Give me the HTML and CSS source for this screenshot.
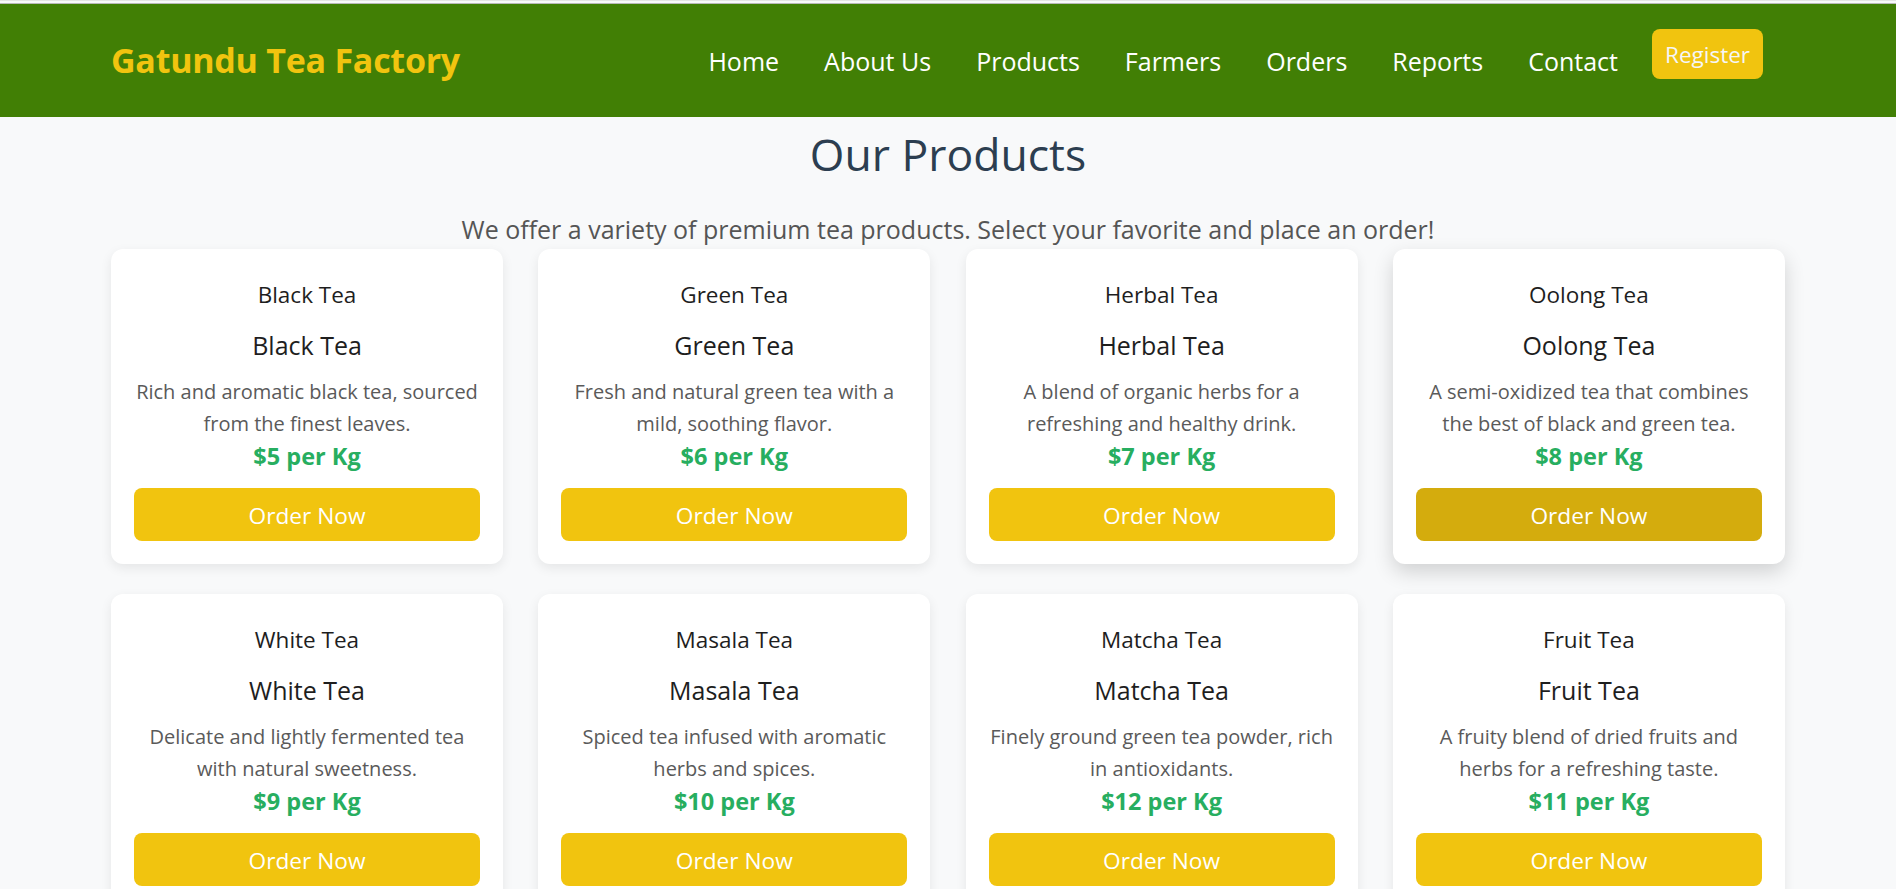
FILE: index.html
```html
<!DOCTYPE html>
<html lang="en">
<head>
<meta charset="utf-8">
<title>Gatundu Tea Factory - Products</title>
<link rel="stylesheet" href="styles.css">
</head>
<body>
<header class="site-header">
  <div class="header-inner">
    <a class="logo" href="#">Gatundu Tea Factory</a>
    <nav class="main-nav">
      <ul class="nav-links">
        <li><a href="#">Home</a></li>
        <li><a href="#">About Us</a></li>
        <li><a href="#">Products</a></li>
        <li><a href="#">Farmers</a></li>
        <li><a href="#">Orders</a></li>
        <li><a href="#">Reports</a></li>
        <li><a href="#">Contact</a></li>
      </ul>
      <a class="btn-register" href="#">Register</a>
    </nav>
  </div>
</header>

<main class="products">
  <h1 class="page-title">Our Products</h1>
  <p class="page-subtitle">We offer a variety of premium tea products. Select your favorite and place an order!</p>

  <div class="product-grid">
    <div class="card">
      <div class="card-label">Black Tea</div>
      <h3 class="card-title">Black Tea</h3>
      <p class="card-desc">Rich and aromatic black tea, sourced from the finest leaves.</p>
      <div class="card-price">$5 per Kg</div>
      <button class="btn-order">Order Now</button>
    </div>
    <div class="card">
      <div class="card-label">Green Tea</div>
      <h3 class="card-title">Green Tea</h3>
      <p class="card-desc">Fresh and natural green tea with a mild, soothing flavor.</p>
      <div class="card-price">$6 per Kg</div>
      <button class="btn-order">Order Now</button>
    </div>
    <div class="card">
      <div class="card-label">Herbal Tea</div>
      <h3 class="card-title">Herbal Tea</h3>
      <p class="card-desc">A blend of organic herbs for a refreshing and healthy drink.</p>
      <div class="card-price">$7 per Kg</div>
      <button class="btn-order">Order Now</button>
    </div>
    <div class="card card-hover">
      <div class="card-label">Oolong Tea</div>
      <h3 class="card-title">Oolong Tea</h3>
      <p class="card-desc">A semi-oxidized tea that combines the best of black and green tea.</p>
      <div class="card-price">$8 per Kg</div>
      <button class="btn-order">Order Now</button>
    </div>
    <div class="card">
      <div class="card-label">White Tea</div>
      <h3 class="card-title">White Tea</h3>
      <p class="card-desc">Delicate and lightly fermented tea with natural sweetness.</p>
      <div class="card-price">$9 per Kg</div>
      <button class="btn-order">Order Now</button>
    </div>
    <div class="card">
      <div class="card-label">Masala Tea</div>
      <h3 class="card-title">Masala Tea</h3>
      <p class="card-desc">Spiced tea infused with aromatic herbs and spices.</p>
      <div class="card-price">$10 per Kg</div>
      <button class="btn-order">Order Now</button>
    </div>
    <div class="card">
      <div class="card-label">Matcha Tea</div>
      <h3 class="card-title">Matcha Tea</h3>
      <p class="card-desc">Finely ground green tea powder, rich in antioxidants.</p>
      <div class="card-price">$12 per Kg</div>
      <button class="btn-order">Order Now</button>
    </div>
    <div class="card">
      <div class="card-label">Fruit Tea</div>
      <h3 class="card-title">Fruit Tea</h3>
      <p class="card-desc">A fruity blend of dried fruits and herbs for a refreshing taste.</p>
      <div class="card-price">$11 per Kg</div>
      <button class="btn-order">Order Now</button>
    </div>
  </div>
</main>
</body>
</html>
```

FILE: styles.css
```css
* {
  box-sizing: border-box;
}

html {
  background: #f8f9fa;
}

body {
  margin: 0;
  padding-top: 2px;
  border-top: 1px solid #e4e4e4;
  background: #f8f9fa;
  font-family: "Open Sans", "Noto Sans", "DejaVu Sans", sans-serif;
  color: #222;
}

/* ---------- Header ---------- */
.site-header {
  background: #417f05;
  border-top: 1px solid #b9b9b9;
  height: 114px;
}

.header-inner {
  width: 1674px;
  margin: 0 auto;
  height: 100%;
  display: flex;
  align-items: center;
  justify-content: space-between;
}

.logo {
  font-size: 34px;
  line-height: 46px;
  font-weight: 700;
  color: #f1c40f;
  text-decoration: none;
  margin-bottom: 1px;
  letter-spacing: -0.25px;
}

.main-nav {
  display: flex;
  align-items: center;
  margin-right: 22px;
}

.nav-links {
  list-style: none;
  margin: 0;
  padding: 0;
  display: flex;
  gap: 45px;
}

.nav-links a {
  display: block;
  font-size: 25px;
  line-height: 34px;
  color: #ffffff;
  text-decoration: none;
  margin-top: 1px;
}

.btn-register {
  margin-left: 34px;
  margin-bottom: 14px;
  display: block;
  background: #f1c40f;
  color: #f6f6f6;
  font-size: 22.5px;
  line-height: 30px;
  padding: 11px 13px 9px;
  border-radius: 8px;
  text-decoration: none;
}

/* ---------- Products ---------- */
.products {
  width: 1674px;
  margin: 0 auto;
  padding-bottom: 40px;
}

.page-title {
  margin: 7px 0 0;
  font-size: 44.5px;
  line-height: 60px;
  font-weight: 400;
  text-align: center;
  color: #2c3e50;
}

.page-subtitle {
  margin: 30px 0 0;
  font-size: 25px;
  line-height: 30px;
  text-align: center;
  color: #555;
}

.product-grid {
  margin-top: 5px;
  display: grid;
  grid-template-columns: repeat(4, 392px);
  column-gap: 35.3px;
  row-gap: 30px;
}

.card {
  background: #ffffff;
  border-radius: 12px;
  box-shadow: 0 4px 12px rgba(0, 0, 0, 0.08);
  padding: 31px 23px 23px;
  display: flex;
  flex-direction: column;
  align-items: stretch;
  text-align: center;
}

.card-hover {
  box-shadow: 0 8px 20px rgba(0, 0, 0, 0.16);
}

.card-label {
  font-size: 22.5px;
  line-height: 30px;
  color: #1e1e1e;
}

.card-title {
  margin: 18px 0 0;
  font-size: 25px;
  line-height: 34px;
  font-weight: 400;
  color: #1e1e1e;
}

.card-desc {
  margin: 14px 0 0;
  font-size: 20px;
  line-height: 32px;
  color: #5a5a5a;
}

.card-price {
  margin-top: 1px;
  font-size: 23.5px;
  line-height: 30px;
  font-weight: 700;
  color: #27ae60;
}

.btn-order {
  margin-top: 17px;
  height: 53px;
  border: none;
  border-radius: 8px;
  background: #f1c40f;
  color: #ffffff;
  font-family: inherit;
  font-size: 22.7px;
  line-height: 30px;
  padding: 2px 0 0;
  cursor: pointer;
}

.card-hover .btn-order {
  background: #d4ac0d;
}
```
